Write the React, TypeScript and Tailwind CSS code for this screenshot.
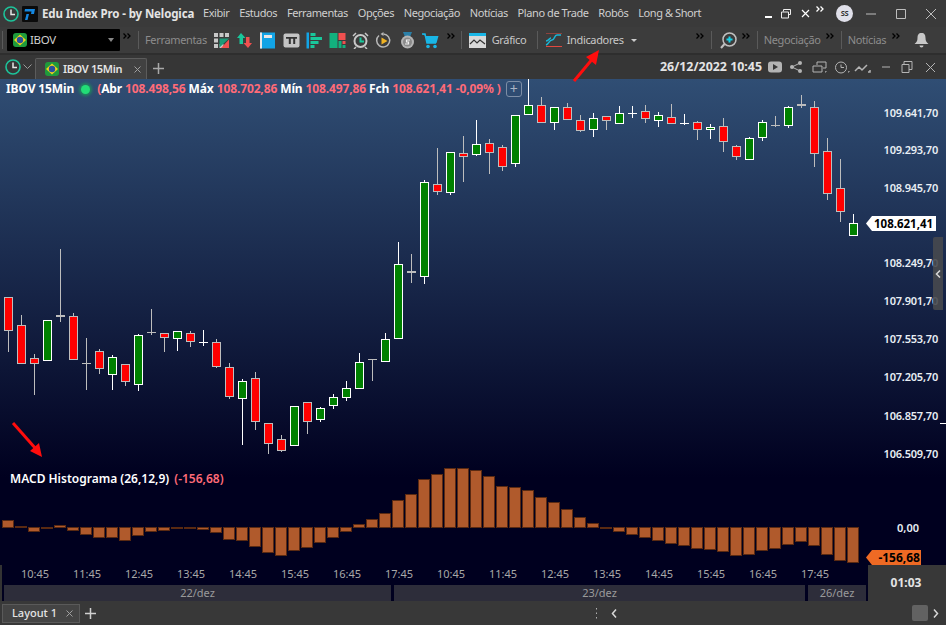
import type { ReactNode } from "react";

type Candle = [number, number, number, number, "r" | "g" | "d" | "w"];

// wick top, body top, body bottom, wick bottom (page y), one per 13px column
const CANDLES: Candle[] = [
  [297, 297, 330, 352, "r"], [315, 325, 363, 363, "r"], [354, 358, 363, 395, "r"], [320, 320, 360, 360, "g"],
  [249, 315, 317, 322, "d"], [313, 316, 359, 359, "r"], [338, 363, 363, 390, "d"], [349, 351, 368, 374, "r"],
  [355, 357, 374, 390, "g"], [364, 364, 381, 386, "r"], [334, 335, 384, 391, "g"], [309, 332, 332, 335, "d"],
  [333, 333, 337, 352, "r"], [331, 331, 338, 351, "g"], [331, 333, 341, 347, "r"], [330, 342, 342, 346, "w"],
  [339, 342, 366, 368, "r"], [363, 367, 396, 399, "r"], [379, 381, 398, 445, "g"], [372, 378, 421, 430, "r"],
  [423, 423, 443, 454, "r"], [435, 439, 450, 452, "r"], [406, 406, 445, 445, "g"], [402, 402, 421, 434, "r"],
  [407, 408, 419, 422, "g"], [394, 397, 405, 409, "g"], [381, 388, 397, 401, "g"], [353, 362, 388, 388, "g"],
  [359, 359, 359, 381, "d"], [333, 339, 361, 361, "g"], [242, 264, 338, 338, "g"], [254, 271, 273, 283, "d"],
  [180, 182, 276, 284, "g"], [148, 184, 191, 195, "r"], [152, 152, 192, 195, "g"], [136, 153, 156, 182, "r"],
  [120, 144, 154, 156, "g"], [139, 143, 152, 174, "r"], [145, 147, 166, 171, "r"], [115, 115, 163, 167, "g"],
  [79, 105, 114, 114, "g"], [97, 105, 122, 122, "r"], [107, 107, 122, 130, "g"], [103, 107, 119, 119, "r"],
  [115, 120, 130, 132, "r"], [113, 118, 129, 137, "g"], [116, 116, 120, 130, "r"], [106, 113, 123, 123, "g"],
  [106, 113, 113, 118, "w"], [105, 111, 118, 123, "r"], [112, 115, 120, 127, "g"], [104, 117, 123, 123, "r"],
  [114, 123, 123, 125, "w"], [121, 122, 129, 140, "r"], [124, 127, 129, 139, "g"], [118, 126, 141, 152, "r"],
  [145, 146, 156, 160, "r"], [137, 138, 159, 159, "g"], [120, 122, 137, 141, "g"], [116, 125, 125, 127, "d"],
  [106, 107, 125, 128, "g"], [95, 104, 106, 108, "d"], [101, 107, 153, 167, "r"], [138, 151, 193, 200, "r"],
  [159, 188, 211, 222, "r"], [214, 223, 235, 235, "g"],
];

const MACD = [
  7, 1, -4, 0, 2, -3, -7, -10, -10, -13, -8, -4, -3, -1, -1, -2, -5, -12, -13, -19, -25, -28, -23, -20, -15, -10, -4, 3,
  8, 14, 27, 33, 48, 53, 59, 59, 57, 51, 41, 40, 37, 30, 25, 18, 10, 4, 0, -4, -7, -10, -13, -16, -18, -21, -22, -24,
  -28, -27, -23, -21, -17, -14, -18, -27, -33, -35,
];

const PRICES: [string, number][] = [
  ["109.641,70", 113], ["109.293,70", 150], ["108.945,70", 188], ["108.249,70", 263], ["107.901,70", 301],
  ["107.553,70", 339], ["107.205,70", 377], ["106.857,70", 416], ["106.509,70", 454],
];

const TIMES = [
  "10:45", "11:45", "12:45", "13:45", "14:45", "15:45", "16:45", "17:45",
  "10:45", "11:45", "12:45", "13:45", "14:45", "15:45", "16:45", "17:45",
];

function Flag({ size = 14 }: { size?: number }) {
  return (
    <svg width={size} height={size} viewBox="0 0 14 14" className="shrink-0">
      <rect width="14" height="14" rx="3" fill="#1f9a3c" />
      <path d="M7 1.5 13 7 7 12.5 1 7Z" fill="#f2d21b" />
      <circle cx="7" cy="7" r="3.2" fill="#2a4f9e" />
    </svg>
  );
}

function ClockTeal() {
  return (
    <svg width="18" height="18" viewBox="0 0 18 18" className="shrink-0">
      <circle cx="9" cy="9" r="7" fill="none" stroke="#1dc39a" strokeWidth="1.6" />
      <path d="M9 4.5V9.5H13" fill="none" stroke="#e6e6e6" strokeWidth="1.5" />
    </svg>
  );
}

function More({ color = "#000000" }: { color?: string }) {
  return (
    <svg width="8" height="6" viewBox="0 0 8 6" className="mb-[9px] shrink-0">
      <path d="M.5.5 3 3 .5 5.500M4.500.5 7 3 4.500 5.500" fill="none" stroke={color} strokeWidth="1.300" />
    </svg>
  );
}

function Sep({ ml, mr }: { ml: string; mr: string }) {
  return <span className={`h-[18px] w-px bg-[#5a5a5a] shrink-0 ${ml} ${mr}`} />;
}

function ToolIcon({ children }: { children: ReactNode }) {
  return (
    <svg width="17" height="17" viewBox="0 0 17 17" className="shrink-0">
      {children}
    </svg>
  );
}

function ToolIcons() {
  return (
    <div className="flex items-center gap-[6.2px]">
      <ToolIcon>
        <path d="M1 1h4v4H1zM6.500 1h4v4h-4zM12 1h4v4h-4zM1 6.500h4v4H1zM1 12h4v4H1zM6.500 12h4v4h-4z" fill="#c8c8c8" />
        <path d="M6.500 6.500h9.500L6.500 15.500z" fill="#1d9a78" />
        <path d="M16 7.500v8.500H8z" fill="#f0504f" />
      </ToolIcon>
      <ToolIcon>
        <path d="M5 1 9.500 6H7v6H3.500V6H1z" fill="#19c79b" />
        <path d="M12 16 7.500 11H10V5h3.500v6H16z" fill="#f0504f" />
      </ToolIcon>
      <ToolIcon>
        <rect x="1" y="0.500" width="15" height="16" fill="#12a4e6" />
        <rect x="1" y="0.500" width="2" height="16" fill="#e8e8e8" />
        <rect x="5" y="3" width="8" height="3" fill="#e8e8e8" />
      </ToolIcon>
      <ToolIcon>
        <rect x="0.500" y="1.500" width="16" height="14" rx="2" fill="#c4c4c4" />
        <path d="M3 5h11v1.800h-1.800V12h-2V6.800H7.800V12h-2V6.800H3z" fill="#333" />
      </ToolIcon>
      <ToolIcon>
        <rect x="0.500" y="0.500" width="2.500" height="16" fill="#12a4e6" />
        <path d="M4.500 1h5v3h-5zM4.500 5h11.500v3H4.500zM4.500 9h8v3h-8zM4.500 13h4v3h-4z" fill="#19c79b" />
      </ToolIcon>
      <ToolIcon>
        <rect x="0.500" y="1" width="8" height="15" fill="#12b07e" />
        <rect x="9.500" y="1" width="7" height="7" fill="#f0504f" />
        <rect x="9.500" y="9" width="3" height="7" fill="#12b07e" />
        <rect x="13.500" y="9" width="3" height="3" fill="#f0504f" />
        <rect x="13.500" y="13" width="3" height="3" fill="#12b07e" />
      </ToolIcon>
      <ToolIcon>
        <circle cx="8.500" cy="9" r="6" fill="none" stroke="#c8c8c8" strokeWidth="2" />
        <path d="M8.500 5.500V9.500H12" fill="none" stroke="#19c79b" strokeWidth="2" />
        <path d="M1 4 4 1M16 4l-3-3M4 15l-2 2M13 15l2 2" stroke="#c8c8c8" strokeWidth="1.500" />
      </ToolIcon>
      <ToolIcon>
        <path d="M4 3.500A6.500 6.500 0 1 0 8.500 2" fill="none" stroke="#b8b8b8" strokeWidth="1.500" />
        <path d="M8.500 0v4L5.500 2z" fill="#b8b8b8" />
        <path d="M6.500 5.500 12.500 9l-6 3.500z" fill="#f0b323" />
      </ToolIcon>
      <ToolIcon>
        <path d="M4 0h9l-2 5H6z" fill="#2a7fa8" />
        <circle cx="8.500" cy="10" r="6.500" fill="#b4b4b4" />
        <circle cx="8.500" cy="10" r="4.500" fill="#8a8a8a" />
        <path d="M11 8H7.500v2h2v2H6" fill="none" stroke="#eee" strokeWidth="1.200" />
      </ToolIcon>
      <ToolIcon>
        <path d="M0 2h3l2 9h9.500L16.500 4H4" fill="#19b6e6" />
        <path d="M0 2h3l2 9h9" fill="none" stroke="#19b6e6" strokeWidth="1.500" />
        <circle cx="6" cy="14.500" r="1.800" fill="#19b6e6" />
        <circle cx="13" cy="14.500" r="1.800" fill="#19b6e6" />
      </ToolIcon>
    </div>
  );
}

function CandleMark({ c, i }: { c: Candle; i: number }) {
  const [wt, bt, bb, wb, kind] = c;
  const x = 8.5 + 13 * i;
  const bright = kind === "g" || kind === "w";
  const line = bright ? "#ffffff" : "#bdbdbd";
  const flat = kind === "d" || kind === "w";
  return (
    <g>
      <line x1={x} x2={x} y1={wt} y2={wb} stroke={line} />
      {flat ? (
        <rect x={x - 4.5} y={bt} width={9} height={Math.max(bb - bt, 1)} fill={line} />
      ) : (
        <rect
          x={x - 4}
          y={bt + 0.5}
          width={8}
          height={bb - bt}
          fill={kind === "g" ? "#008000" : "#ff0000"}
          stroke={line}
        />
      )}
    </g>
  );
}

function ChartDrawing() {
  return (
    <svg
      viewBox="0 79 946 486"
      width="946"
      height="486"
      shapeRendering="crispEdges"
      className="absolute inset-0"
    >
      {CANDLES.map((c, i) => (
        <CandleMark key={i} c={c} i={i} />
      ))}
      {MACD.map((v, i) => (
        <rect
          key={i}
          x={2.5 + 13 * i}
          y={v >= 0 ? 527.5 - v : 527.5}
          width={11}
          height={Math.max(Math.abs(v), 0.5)}
          fill={v === 0 ? "#4a2410" : "#b05a2c"}
          stroke="#5a2a12"
        />
      ))}
    </svg>
  );
}

function Arrow({ d }: { d: string }) {
  return <path d={d} fill="none" stroke="#ff0d0d" strokeWidth="3" />;
}

export default function App() {
  return (
    <div className="relative flex h-[625px] w-[946px] flex-col overflow-hidden bg-[#383838] font-['Noto_Sans',sans-serif] text-[11px] tracking-[-0.35px] text-[#c8c8c8]">
      {/* title + menu */}
      <div className="flex h-[27px] shrink-0 items-center bg-[#3a3a3a] pl-[2px]">
        <ClockTeal />
        <svg width="16" height="16" viewBox="0 0 16 16" className="ml-[2px] shrink-0">
          <rect width="16" height="16" rx="1" fill="#0b0b0b" />
          <path d="M3 3h10l-1 5H7l-1.500 6H3l1.500-6H9l.5-2.500H2.500z" fill="#1487e0" />
        </svg>
        <span className="ml-[4px] w-[161px] shrink-0 whitespace-nowrap text-[11.5px] font-bold tracking-[-0.12px] text-[#e4e4e4]">
          Edu Index Pro - by Nelogica
        </span>
        <nav className="flex gap-[9.8px] tracking-[-0.42px] text-[#cfcfcf]">
          <span>Exibir</span>
          <span>Estudos</span>
          <span>Ferramentas</span>
          <span>Opções</span>
          <span>Negociação</span>
          <span>Notícias</span>
          <span>Plano de Trade</span>
          <span>Robôs</span>
          <span>Long &amp; Short</span>
        </nav>
        <div className="ml-auto flex items-center pr-[10px]">
          <span className="mt-[6px] h-[2px] w-[7px] bg-white" />
          <svg width="10" height="10" viewBox="0 0 10 10" className="ml-[9px]">
            <path d="M2.500 2.500V.5h7v5h-2M.5 3h7v6h-7z" fill="none" stroke="#eee" />
          </svg>
          <svg width="9" height="9" viewBox="0 0 9 9" className="ml-[10px]">
            <path d="M1 1l7 7M8 1 1 8" stroke="#fff" strokeWidth="1.200" />
          </svg>
          <span className="ml-[6px]">
            <More color="#ffffff" />
          </span>
          <span className="ml-[12px] flex h-[17px] w-[17px] items-center justify-center rounded-full bg-[#e0e0ea] text-[7.5px] font-bold text-[#333]">
            SS
          </span>
          <svg width="70" height="12" viewBox="0 0 70 12" className="ml-[13px]">
            <path d="M0 6h10M30.500 1.500h9v9h-9zM60 1l10 10M70 1 60 11" fill="none" stroke="#bdbdbd" />
          </svg>
        </div>
      </div>

      {/* toolbar */}
      <div className="flex h-[26px] shrink-0 items-center bg-[#3c3c3c] pl-[2px]">
        <span className="h-[18px] w-px bg-[#5a5a5a]" />
        <div className="ml-[4px] flex h-[22px] w-[113px] shrink-0 items-center gap-[3px] rounded-[1px] bg-black pl-[6px] text-[11.5px] text-[#d0d0d0]">
          <Flag />
          <span>IBOV</span>
          <span className="ml-auto mr-[6px] h-0 w-0 border-x-[3.5px] border-t-[4px] border-x-transparent border-t-[#888]" />
        </div>
        <span className="ml-[3px] w-[10px] shrink-0"><More /></span>
        <Sep ml="ml-[5px]" mr="mr-[6px]" />
        <span className="w-[68px] shrink-0 text-[#8c8c8c]">Ferramentas</span>
        <ToolIcons />
        <span className="ml-[8px] w-[10px] shrink-0"><More /></span>
        <Sep ml="ml-[4px]" mr="mr-[7px]" />
        <svg width="17" height="15" viewBox="0 0 17 15" className="shrink-0">
          <rect width="17" height="15" fill="#d8d8d8" />
          <rect width="17" height="3" fill="#19b6e6" />
          <path d="M1 11l4-4 3 3 3-3 5 4" fill="none" stroke="#333" strokeWidth="1.200" />
        </svg>
        <span className="ml-[6px] w-[40px] shrink-0">Gráfico</span>
        <Sep ml="ml-[5px]" mr="mr-[7px]" />
        <svg width="17" height="14" viewBox="0 0 17 14" className="shrink-0">
          <path d="M1 0h16M1 13.500h16" stroke="#e0483f" />
          <path d="M1 12c3-1 3-5 6-5s2-5 5-5 2 0 4 0M1 8c3 0 3-3 5-3" fill="none" stroke="#19b6d6" strokeWidth="1.500" />
        </svg>
        <span className="ml-[5px] w-[60px] shrink-0">Indicadores</span>
        <span className="ml-[4px] h-0 w-0 border-x-[3px] border-t-[3px] border-x-transparent border-t-[#ccc]" />
        <span className="ml-[59px] w-[10px] shrink-0"><More /></span>
        <Sep ml="ml-[5px]" mr="mr-[8px]" />
        <svg width="17" height="17" viewBox="0 0 17 17" className="shrink-0">
          <circle cx="9.500" cy="7.500" r="6.500" fill="none" stroke="#c0c0c0" strokeWidth="1.500" />
          <path d="M9.500 4.500v6M6.500 7.500h6" stroke="#19d0e6" strokeWidth="2" />
          <path d="M4.500 12 1 16" stroke="#c0c0c0" strokeWidth="2" />
        </svg>
        <span className="ml-[5px] w-[10px] shrink-0"><More /></span>
        <Sep ml="ml-[5px]" mr="mr-[6px]" />
        <span className="w-[58px] shrink-0 text-[#8c8c8c]">Negociação</span>
        <span className="ml-[4px] w-[10px] shrink-0"><More /></span>
        <Sep ml="ml-[5px]" mr="mr-[6px]" />
        <span className="w-[40px] shrink-0 text-[#8c8c8c]">Notícias</span>
        <span className="ml-[4px] w-[10px] shrink-0"><More /></span>
        <svg width="15" height="16" viewBox="0 0 15 16" className="ml-[12px] shrink-0">
          <path d="M7.500 1c3 0 4 2 4 5 0 3 1 4 3 6H.5c2-2 3-3 3-6 0-3 1-5 4-5Z" fill="#c8c8c8" />
          <path d="M5.500 13.500h4a2 2 0 0 1-4 0Z" fill="#c8c8c8" />
        </svg>
      </div>

      {/* chart tabs */}
      <div className="flex h-[26px] shrink-0 items-end border-t-2 border-[#2e2e2e] bg-[#363636] pl-[4px]">
        <div className="mb-[3px] flex items-center">
          <ClockTeal />
          <svg width="9" height="6" viewBox="0 0 9 6" className="ml-[1px]">
            <path d="M.5.5l4 4 4-4" fill="none" stroke="#9a9a9a" />
          </svg>
        </div>
        <div className="ml-[3px] flex h-[21px] w-[112px] shrink-0 items-center rounded-t-[2px] border border-b-0 border-[#5c5c5c] bg-[#414141] pl-[9px] font-semibold text-[#e4e4e4]">
          <Flag />
          <span className="ml-[4px]">IBOV 15Min</span>
          <svg width="7" height="7" viewBox="0 0 7 7" className="ml-auto mr-[5px]">
            <path d="M.5.5l6 6M6.500.5l-6 6" stroke="#a0a0a0" />
          </svg>
        </div>
        <svg width="11" height="11" viewBox="0 0 11 11" className="mb-[5px] ml-[6px]">
          <path d="M5.500 0v11M0 5.500h11" stroke="#a8a8a8" strokeWidth="1.500" />
        </svg>
        <div className="mb-[2px] ml-auto flex items-center pr-[8px]">
          <span className="text-[12.4px] font-bold tracking-normal text-[#e4e4e4]">26/12/2022 10:45</span>
          <svg width="170" height="14" viewBox="0 0 170 14" className="ml-[6px]">
            <rect x="0" y="0.500" width="14" height="11" rx="3" fill="#b4b4b4" />
            <path d="M5 3l5 3-5 3z" fill="#363636" />
            <circle cx="24" cy="6" r="2" fill="#b4b4b4" />
            <circle cx="32" cy="2" r="2" fill="#b4b4b4" />
            <circle cx="32" cy="10" r="2" fill="#b4b4b4" />
            <path d="M24 6l8-4M24 6l8 4" stroke="#b4b4b4" />
            <path d="M49 4V1h9v6h-3M45 5h9v6h-9zM58 10v1h-1" fill="none" stroke="#b4b4b4" />
            <circle cx="73" cy="6.500" r="5.500" fill="none" stroke="#b4b4b4" />
            <path d="M73 3.500v3h3M80 11h1v-1" fill="none" stroke="#b4b4b4" />
            <path d="M87 10l4-4 3 3 5-5M100 11h2v-2" fill="none" stroke="#b4b4b4" strokeWidth="1.500" />
            <path d="M114 6h8" stroke="#b4b4b4" />
            <path d="M136 3V.5h8v8h-3M134 3.500h7v8h-7z" fill="none" stroke="#b4b4b4" />
            <path d="M158 2l9 9M167 2l-9 9" stroke="#b4b4b4" />
          </svg>
        </div>
      </div>

      {/* chart */}
      <div className="flex min-h-0 flex-1 flex-col border-l-2 border-[#333] bg-[#00001f]">
        <div className="relative -ml-[2px] h-[486px] shrink-0 overflow-hidden bg-[linear-gradient(180deg,#304e74_0%,#00001f_82%)]">
          <ChartDrawing />
          <div className="absolute left-[6px] top-[1px] flex items-center gap-[3px] whitespace-nowrap text-[12px] font-bold tracking-[-0.12px] text-[#ff6b78]">
            <span className="mr-[2px] text-white">IBOV 15Min</span>
            <span className="mx-[2px] h-[9px] w-[9px] rounded-full bg-[#22dd77] shadow-[0_0_3px_2px_#1f8a5c]" />
            <span className="ml-[2px]">
              (<span className="text-white">Abr</span> 108.498,56 <span className="text-white">Máx</span> 108.702,86{" "}
              <span className="text-white">Mín</span> 108.497,86 <span className="text-white">Fch</span> 108.621,41 -0,09% )
            </span>
            <span className="ml-[2px] flex h-[16px] w-[16px] items-center justify-center rounded-[3px] border border-[#7d8ea6] text-[14px] font-normal leading-none text-[#aab4c4]">
              +
            </span>
          </div>
          {PRICES.map(([label, y]) => (
            <span
              key={label}
              className="absolute right-[8px] text-[11px] font-semibold leading-none tracking-[-0.2px] text-[#e8eef4]"
              style={{ top: y - 85 }}
            >
              {label}
            </span>
          ))}
          <div className="absolute left-[866px] top-[137px] flex h-[15px] items-center bg-white pl-[2px] pr-[3px] text-[11.5px] font-bold leading-none tracking-normal text-black [clip-path:polygon(6px_0,100%_0,100%_100%,6px_100%,0_50%)]">
            <span className="pl-[6px]">108.621,41</span>
          </div>
          <div className="absolute left-[933px] top-[158px] flex h-[73px] w-[10px] items-center justify-center rounded-l-[2px] bg-[#47494e]/90 text-[#d0d0d0]">
            <svg width="6" height="8" viewBox="0 0 6 8">
              <path d="M5 .5 1.500 4 5 7.500" fill="none" stroke="#d8d8d8" strokeWidth="1.500" />
            </svg>
          </div>
          <span className="absolute left-[940px] top-[344px] h-px w-[6px] bg-white" />
          <div className="absolute left-[10px] top-[391px] text-[12px] font-semibold tracking-normal text-white">
            MACD Histograma (26,12,9) <span className="ml-[2px] text-[#ff6b78]">(-156,68)</span>
          </div>
          <span className="absolute right-[27px] top-[443px] text-[11px] font-semibold leading-none tracking-normal text-[#e8eef4]">
            0,00
          </span>
          <div className="absolute left-[866px] top-[471px] flex h-[15px] w-[55px] items-center justify-end bg-[#ee6a24] pr-[1px] text-[12px] font-bold leading-none tracking-normal text-black [clip-path:polygon(6px_0,100%_0,100%_100%,6px_100%,0_50%)]">
            -156,68
          </div>
        </div>
        <div className="flex min-h-0 flex-1">
          <div className="w-[866px] shrink-0">
            <div className="flex h-[19px] items-center pl-[7px] tracking-normal text-[#a8a8a8]">
              {TIMES.map((t, i) => (
                <span key={i} className="w-[52px] shrink-0 text-center">
                  {t}
                </span>
              ))}
            </div>
            <div className="mt-px flex h-[16px] gap-[3px] pl-[2px] tracking-normal text-[#9a9a9a]">
              <div className="flex w-[387px] items-center justify-center bg-[#2d2d3a]">22/dez</div>
              <div className="flex w-[411px] items-center justify-center bg-[#2d2d3a]">23/dez</div>
              <div className="flex w-[58px] items-center justify-center bg-[#2d2d3a]">26/dez</div>
            </div>
          </div>
          <div className="-mr-px flex flex-1 items-center justify-center bg-[#383838] pr-[3px] text-[12px] font-bold tracking-normal text-[#e4e4e4]">
            01:03
          </div>
        </div>
      </div>

      {/* layouts */}
      <div className="flex h-[24px] shrink-0 items-center bg-[#383838] pl-[2px]">
        <div className="flex h-[19px] w-[78px] items-center border border-[#5a5a5a] bg-[#444] pl-[9px] font-medium tracking-normal text-[#e4e4e4]">
          <span>Layout 1</span>
          <svg width="7" height="7" viewBox="0 0 7 7" className="ml-auto mr-[6px]">
            <path d="M.5.5l6 6M6.500.5l-6 6" stroke="#a0a0a0" />
          </svg>
        </div>
        <svg width="11" height="11" viewBox="0 0 11 11" className="ml-[5px]">
          <path d="M5.500 0v11M0 5.500h11" stroke="#d0d0d0" strokeWidth="1.500" />
        </svg>
        <svg width="3" height="11" viewBox="0 0 3 11" className="ml-[499px]">
          <path d="M1 0h1v1.500H1zM1 4.500h1V6H1zM1 9h1v1.500H1z" fill="#b0b0b0" />
        </svg>
        <svg width="6" height="9" viewBox="0 0 6 9" className="ml-[13px]">
          <path d="M5 .5 1.500 4.500 5 8.500" fill="none" stroke="#d8d8d8" strokeWidth="1.500" />
        </svg>
        <span className="ml-auto h-[16px] w-[16px] rounded-[2px] bg-[#626262]" />
        <svg width="6" height="9" viewBox="0 0 6 9" className="ml-[5px] mr-[7px]">
          <path d="M1 .5 4.500 4.500 1 8.500" fill="none" stroke="#d8d8d8" strokeWidth="1.500" />
        </svg>
      </div>

      {/* red markers drawn over the screenshot */}
      <svg viewBox="0 0 946 625" width="946" height="625" className="pointer-events-none absolute inset-0">
        <Arrow d="M574 81 594 57" />
        <path d="M599 50 596 65 586 57Z" fill="#ff0d0d" />
        <Arrow d="M13 423 36 449" />
        <path d="M42 457 30 451 39 443Z" fill="#ff0d0d" />
      </svg>
    </div>
  );
}
